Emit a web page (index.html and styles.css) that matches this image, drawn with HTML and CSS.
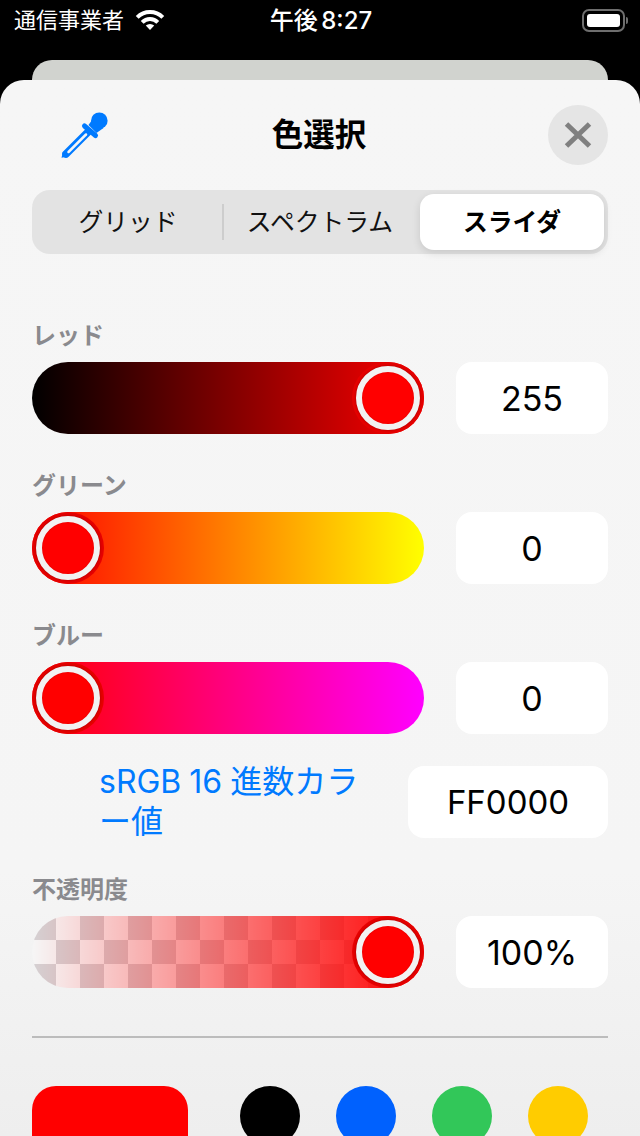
FILE: index.html
```html
<!DOCTYPE html>
<html lang="ja">
<head>
<meta charset="utf-8">
<title>色選択</title>
<link rel="stylesheet" href="styles.css">
</head>
<body>
<div class="screen">
  <div class="status">
    <div class="status-left">
      <span>通信事業者</span>
      <svg class="wifi" viewBox="0 0 30 22" aria-hidden="true"><path d="M2.200 8.300a18 18 0 0 1 25.600 0M7.200 13.300a11 11 0 0 1 15.600 0"/><path class="wifi-dot" d="M15 21 10.800 16.600a6 6 0 0 1 8.400 0z"/></svg>
    </div>
    <span class="time">午後 8:27</span>
    <div class="battery"><span class="battery-body"><span class="battery-fill"></span></span><span class="battery-cap"></span></div>
  </div>
  <div class="back-card"></div>
  <main class="sheet">
    <header class="sheet-head">
      <svg class="dropper" viewBox="60 110 50 50" aria-hidden="true">
        <path class="tube" d="M66 154 88 132"/>
        <path class="tip" d="m61.500 157.800 1.500-6.300 5 5z"/>
        <path class="slit" d="M68.500 152 86 134.500"/>
        <path class="collar" d="m84.500 126 11 9.500"/>
        <circle class="bulb" cx="99.300" cy="120.700" r="8.300"/>
        <path class="bulb" d="m88.500 125 5-7 10 10-7 5z"/>
      </svg>
      <h1>色選択</h1>
      <button class="close" aria-label="閉じる"><svg viewBox="0 0 60 60" aria-hidden="true"><path d="m18.500 19 23 22M41.500 19l-23 22"/></svg></button>
    </header>

    <div class="segments">
      <span class="segment">グリッド</span>
      <span class="segment with-divider">スペクトラム</span>
      <span class="segment selected">スライダ</span>
    </div>

    <section class="channel first">
      <label class="channel-label">レッド</label>
      <div class="control">
        <div class="track red end"><span class="thumb"><span></span></span></div>
        <div class="value">255</div>
      </div>
    </section>
    <section class="channel">
      <label class="channel-label">グリーン</label>
      <div class="control">
        <div class="track green"><span class="thumb"><span></span></span></div>
        <div class="value">0</div>
      </div>
    </section>
    <section class="channel">
      <label class="channel-label">ブルー</label>
      <div class="control">
        <div class="track blue"><span class="thumb"><span></span></span></div>
        <div class="value">0</div>
      </div>
    </section>

    <div class="hex-row">
      <span class="hex-label">sRGB 16 進数カラー値</span>
      <div class="value hex">FF0000</div>
    </div>

    <section class="channel opacity">
      <label class="channel-label">不透明度</label>
      <div class="control">
        <div class="track alpha end"><span class="thumb"><span></span></span></div>
        <div class="value">100%</div>
      </div>
    </section>

    <hr class="rule">

    <div class="swatches">
      <span class="current"></span>
      <div class="dots">
        <span class="dot black"></span>
        <span class="dot azure"></span>
        <span class="dot lime"></span>
        <span class="dot amber"></span>
      </div>
    </div>
  </main>
</div>
</body>
</html>
```
FILE: styles.css
```css
* { box-sizing: border-box; }
html, body { margin: 0; padding: 0; background: #000; }
body {
  font-family: Inter, "Noto Sans CJK JP", sans-serif;
  color: #000;
}
.screen {
  width: 640px;
  height: 1136px;
  overflow: hidden;
  background: #000;
}
.status {
  height: 60px;
  padding: 0 12px 20px 14px;
  display: grid;
  grid-template-columns: 1fr auto 1fr;
  align-items: center;
  color: #fff;
  font-size: 22px;
}
.status-left { display: flex; align-items: center; gap: 11px; line-height: 40px; }
.status-left span { margin-top: -1px; }
.wifi { width: 30px; height: 22px; fill: none; stroke: #fff; stroke-width: 4; margin-top: -1px; }
.wifi-dot { fill: #fff; stroke: none; }
.time { font-size: 24px; font-weight: 500; word-spacing: -3px; margin-top: -4px; }
.battery { justify-self: end; display: flex; align-items: center; gap: 1px; }
.battery-body {
  width: 43px;
  height: 23px;
  padding: 3px;
  border: 2px solid #6e6e6e;
  border-radius: 7px;
  display: flex;
}
.battery-fill { flex: 1; background: #fff; border-radius: 3px; }
.battery-cap { width: 2px; height: 7px; background: #6e6e6e; border-radius: 0 2px 2px 0; }
.back-card {
  height: 20px;
  margin: 0 32px;
  background: #d1d3cf;
  border-radius: 20px 20px 0 0;
}
.sheet {
  height: 1056px;
  padding: 0 32px;
  background: linear-gradient(#f6f6f6 0, #f5f5f5 75%, #eeeeee 100%);
  border-radius: 24px 24px 0 0;
}
.sheet-head {
  height: 110px;
  display: grid;
  grid-template-columns: 1fr auto 1fr;
  align-items: center;
}
.dropper { width: 50px; height: 50px; margin-left: 28px; }
.tube { fill: none; stroke: #007aff; stroke-width: 7.500; stroke-linecap: round; }
.tip { fill: #007aff; }
.slit { fill: none; stroke: #f6f6f6; stroke-width: 2.500; stroke-linecap: round; }
.collar { fill: none; stroke: #007aff; stroke-width: 5; stroke-linecap: round; }
.bulb { fill: #007aff; }
h1 { margin: 0 1px 0 -1px; font-size: 31.500px; font-weight: 700; line-height: 40px; }
.close {
  justify-self: end;
  width: 60px;
  height: 60px;
  padding: 0;
  border: 0;
  border-radius: 50%;
  background: #e5e5e5;
}
.close svg { display: block; width: 60px; height: 60px; fill: none; stroke: #808080; stroke-width: 5; }
.segments {
  height: 64px;
  display: grid;
  grid-template-columns: repeat(3, 1fr);
  background: #e3e3e3;
  border-radius: 18px;
  font-size: 24.800px;
}
.segment {
  position: relative;
  display: flex;
  align-items: center;
  justify-content: center;
  padding-bottom: 4px;
  color: #111;
}
.with-divider::before {
  content: "";
  position: absolute;
  left: -2px;
  top: 14px;
  width: 2px;
  height: 36px;
  background: #cdcdcd;
}
.selected {
  margin: 4px;
  background: #fff;
  border-radius: 14px;
  font-weight: 700;
  color: #000;
  box-shadow: 0 3px 8px rgba(0, 0, 0, .12);
}
.channel { margin-top: 34px; }
.channel.first { margin-top: 64px; }
.channel-label {
  display: block;
  height: 36px;
  margin-bottom: 8px;
  line-height: 36px;
  font-size: 24px;
  font-weight: 700;
  color: #8a8a8e;
}
.control { display: flex; justify-content: space-between; }
.track {
  width: 392px;
  height: 72px;
  border-radius: 36px;
  display: flex;
  justify-content: flex-start;
}
.track.end { justify-content: flex-end; }
.red { background: linear-gradient(90deg, #000, #f00); }
.green { background: linear-gradient(90deg, #f00, #ff0); }
.blue { background: linear-gradient(90deg, #f00, #f0f); }
.alpha {
  background:
    linear-gradient(90deg, rgba(255, 0, 0, 0), #f00),
    repeating-conic-gradient(#f6f6f6 0 25%, #d5d1d3 0 50%) 0 0 / 48px 48px;
}
.thumb {
  width: 72px;
  height: 72px;
  padding: 4px;
  border-radius: 50%;
  background: #e60000;
}
.thumb span {
  display: block;
  width: 64px;
  height: 64px;
  border: 6px solid #f2f2f2;
  border-radius: 50%;
  background: #f00;
  box-shadow: 0 0 3px rgba(0, 0, 0, .3), inset 0 0 2px rgba(0, 0, 0, .15);
}
.value {
  width: 152px;
  height: 72px;
  display: flex;
  align-items: center;
  justify-content: center;
  background: #fff;
  border-radius: 16px;
  font-size: 34px;
}
.hex-row {
  margin-top: 28px;
  display: flex;
  justify-content: space-between;
  align-items: center;
}
.hex-label {
  width: 276px;
  margin-left: 67px;
  font-size: 32px;
  line-height: 40px;
  word-spacing: -1px;
  color: #007aff;
}
.value.hex { width: 200px; font-size: 33px; }
.channel.opacity { margin-top: 30px; }
.rule {
  height: 2px;
  margin: 48px 0 0;
  border: 0;
  background: #bcbcbc;
}
.swatches {
  margin-top: 48px;
  display: flex;
  align-items: flex-start;
}
.current { width: 156px; height: 120px; background: #f00; border-radius: 24px; }
.dots { margin-left: 52px; display: flex; gap: 36px; }
.dot { width: 60px; height: 60px; border-radius: 50%; }
.black { background: #000; }
.azure { background: #0061fe; }
.lime { background: #32c759; }
.amber { background: #ffcc00; }
```
